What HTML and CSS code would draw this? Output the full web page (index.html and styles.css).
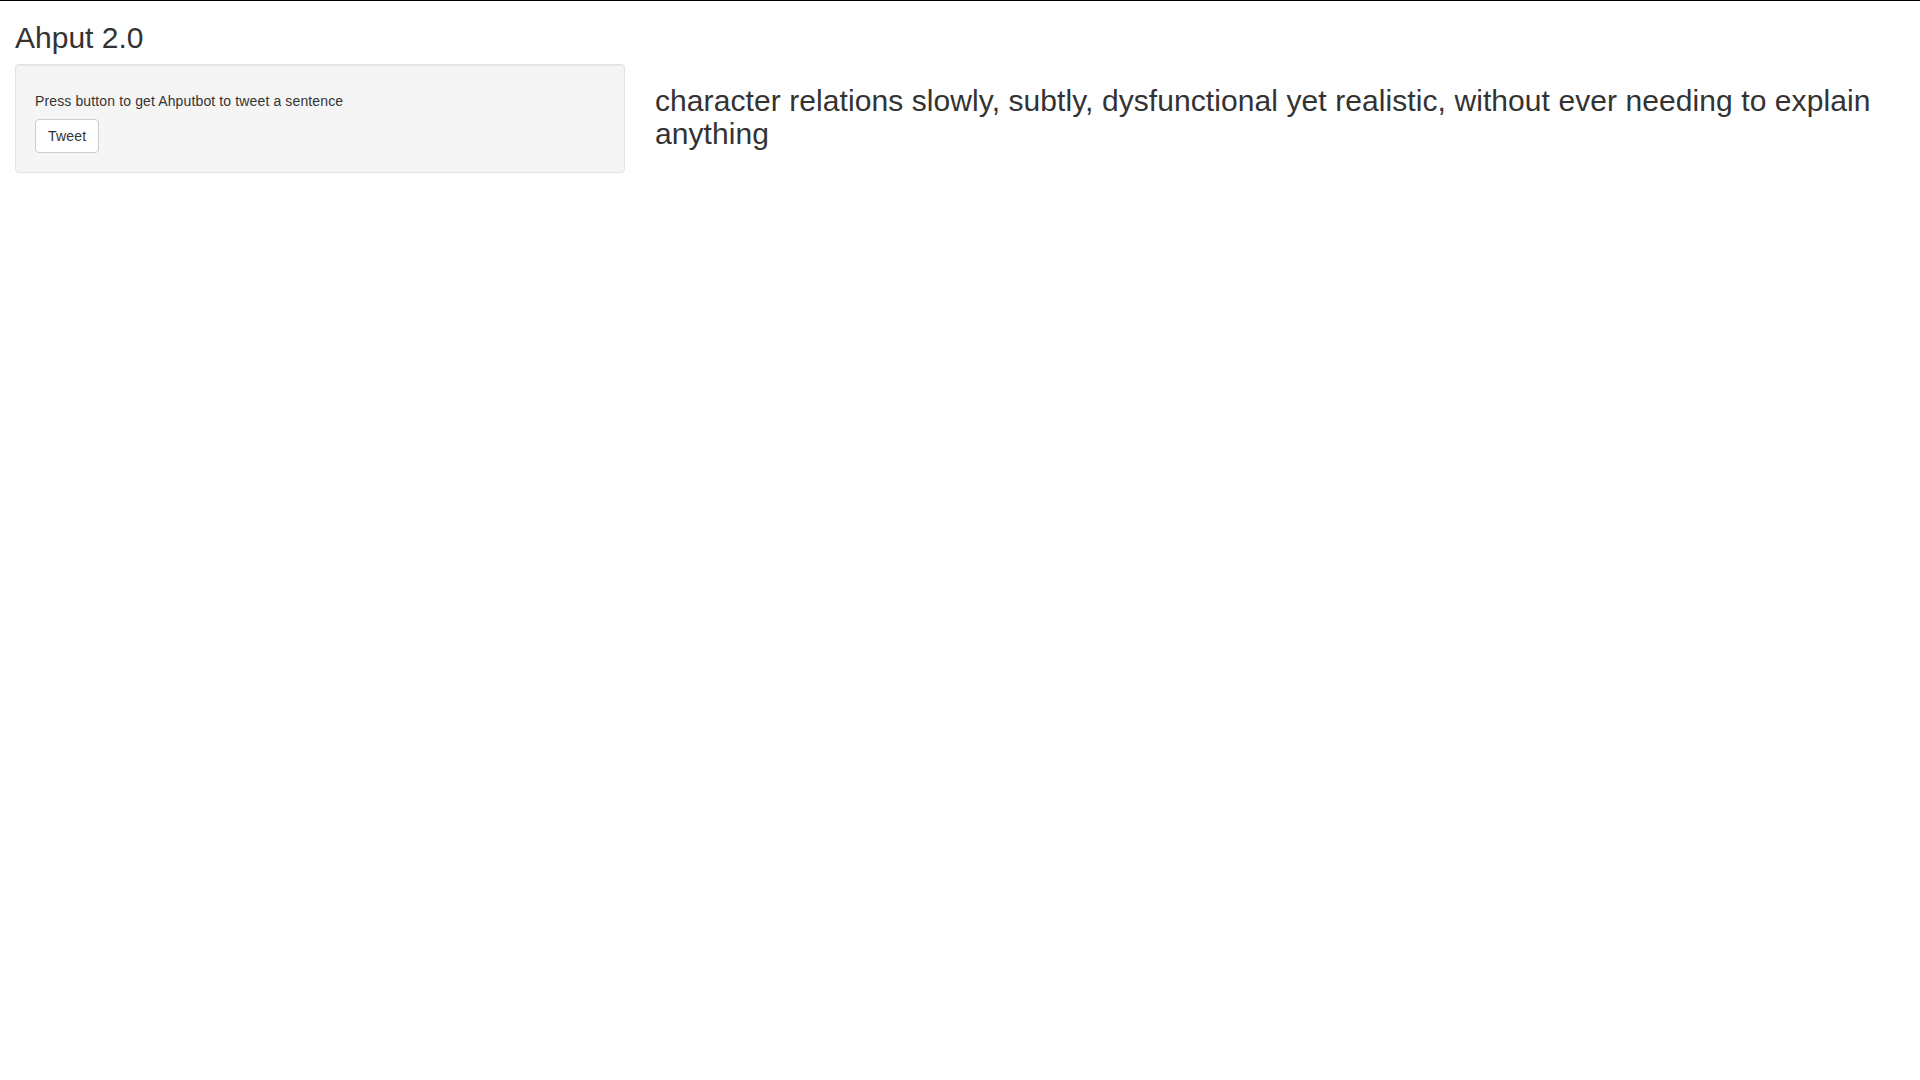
FILE: index.html
```html
<!DOCTYPE html>
<html lang="en">
<head>
<meta charset="utf-8">
<title>Ahput 2.0</title>
<link rel="stylesheet" href="styles.css">
</head>
<body>
<div class="top-line"></div>
<div class="container-fluid">
  <h2 class="title">Ahput 2.0</h2>
  <div class="row">
    <div class="col-side">
      <form class="well">
        <h5 class="help">Press button to get Ahputbot to tweet a sentence</h5>
        <button type="button" class="btn">Tweet</button>
      </form>
    </div>
    <div class="col-main">
      <h2 class="sentence">character relations slowly, subtly, dysfunctional yet realistic, without ever needing to explain anything</h2>
    </div>
  </div>
</div>
</body>
</html>
```

FILE: styles.css
```css
* { box-sizing: border-box; }
html, body { margin: 0; padding: 0; }
body {
  font-family: "Liberation Sans", Arial, Helvetica, sans-serif;
  font-size: 14px;
  line-height: 1.42857143;
  color: #333;
  background: #fff;
}
.top-line {
  height: 1px;
  background: #000;
}
.container-fluid {
  padding: 0 15px;
}
.title {
  font-size: 30px;
  font-weight: 500;
  line-height: 1.1;
  margin: 20px 0 10px;
}
.row {
  display: flex;
  margin: 0 -15px;
}
.col-side {
  width: 33.33333333%;
  padding: 0 15px;
}
.col-main {
  width: 66.66666667%;
  padding: 0 15px;
}
.well {
  min-height: 20px;
  padding: 19px;
  margin: 0 0 20px;
  background-color: #f5f5f5;
  border: 1px solid #e3e3e3;
  border-radius: 4px;
  box-shadow: inset 0 1px 1px rgba(0,0,0,.05);
}
.help {
  font-size: 14px;
  font-weight: 500;
  line-height: 1.1;
  letter-spacing: 0.13px;
  margin: 10px 0;
}
.btn {
  display: inline-block;
  font-family: inherit;
  font-size: 14px;
  line-height: 1.42857143;
  letter-spacing: 0.2px;
  color: #333;
  background: #fff;
  border: 1px solid #ccc;
  border-radius: 4px;
  padding: 6px 12px;
  margin: 0;
  cursor: pointer;
  vertical-align: middle;
}
.sentence {
  font-size: 30px;
  font-weight: 500;
  line-height: 1.1;
  letter-spacing: 0.08px;
  margin: 20px 0 10px;
}
```
